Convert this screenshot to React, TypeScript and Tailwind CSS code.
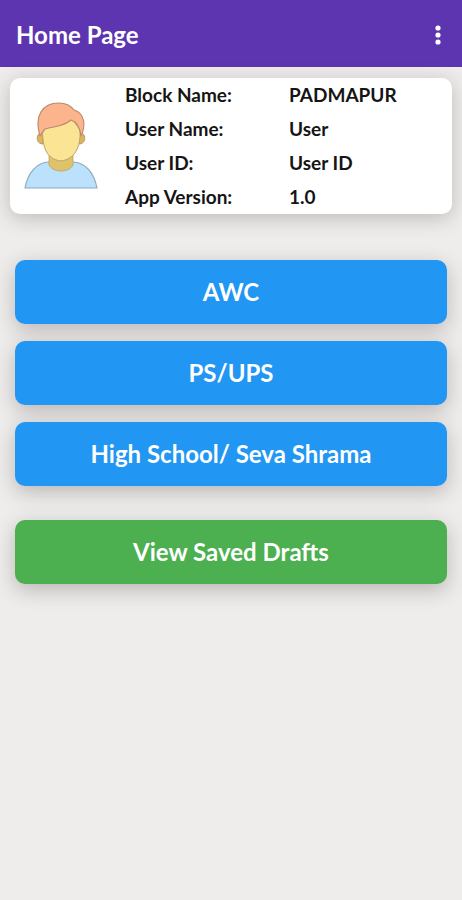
import React from "react";

const details = [
  { label: "Block Name:", value: "PADMAPUR" },
  { label: "User Name:", value: "User" },
  { label: "User ID:", value: "User ID" },
  { label: "App Version:", value: "1.0" },
];

const schoolTypes = ["AWC", "PS/UPS", "High School/ Seva Shrama"];

function Avatar() {
  return (
    <svg viewBox="0 0 74 88" className="h-[88px] w-[74px]" role="img" aria-label="User avatar" strokeLinejoin="round">
      <path d="M1 86C4 70 13 61 24 60C30 60 44 60 50 60C61 61 70 70 73 86Z" fill="#bbe1fc" stroke="#8fa9bd" strokeWidth="1.2" />
      <path d="M25 50V63C29 71 45 71 49 63V50Z" fill="#dfc36b" stroke="#b9a263" strokeWidth="0.8" />
      <path d="M18 31C12 30 11 42 19 42ZM56 31C62 30 63 42 55 42Z" fill="#dfb45f" stroke="#b79a62" strokeWidth="1" />
      <path d="M19 20L46 14L56 28C57 45 51 57 37 59C22 57 17 45 19 20Z" fill="#fbe594" stroke="#b9a56a" strokeWidth="1" />
      <path d="M16 34C10 14 18 1 35 1C42 1 47 4 50 8C61 11 62 24 57 34C56 26 53 20 47 18C39 25 31 24 21 27C19 29 18 31 16 34Z" fill="#fbb48c" stroke="#b98a6c" strokeWidth="1.1" />
    </svg>
  );
}

function ActionButton({ label, color }: { label: string; color: string }) {
  return (
    <button
      type="button"
      className={`h-16 w-full rounded-[10px] text-2xl font-bold text-white shadow-[0_6px_20px_rgba(70,55,60,0.3)] ${color}`}
    >
      {label}
    </button>
  );
}

export default function App() {
  return (
    <div className="min-h-screen bg-[#eeedeb] font-['Lato','Noto_Sans',sans-serif] text-[#151515]">
      <header className="flex h-[67px] items-center justify-between bg-[#5e35b1] pt-[2px] pr-3 pl-4 text-white">
        <h1 className="text-2xl font-bold">Home Page</h1>
        <button type="button" aria-label="More options" className="flex h-8 w-6 items-center justify-center">
          <svg viewBox="0 0 6 20" className="h-5 w-[6px]" fill="currentColor">
            <circle cx="3" cy="3" r="2.6" />
            <circle cx="3" cy="10" r="2.6" />
            <circle cx="3" cy="17" r="2.6" />
          </svg>
        </button>
      </header>

      <main>
        <section className="mx-[10px] mt-[11px] flex h-[136px] items-center rounded-[10px] bg-white pl-[14px] shadow-[0_4px_20px_rgba(60,60,60,0.28)]">
          <Avatar />
          <dl className="ml-[27px] flex-1">
            {details.map(({ label, value }) => (
              <div key={label} className="flex h-[34px] items-center text-[19px] leading-6 font-bold">
                <dt className="w-[164px]">{label}</dt>
                <dd>{value}</dd>
              </div>
            ))}
          </dl>
        </section>

        <div className="mx-[15px] mt-[46px] flex flex-col gap-[17px]">
          {schoolTypes.map((label) => (
            <ActionButton key={label} label={label} color="bg-[#2196f3]" />
          ))}
        </div>
        <div className="mx-[15px] mt-[34px]">
          <ActionButton label="View Saved Drafts" color="bg-[#4caf50]" />
        </div>
      </main>
    </div>
  );
}
